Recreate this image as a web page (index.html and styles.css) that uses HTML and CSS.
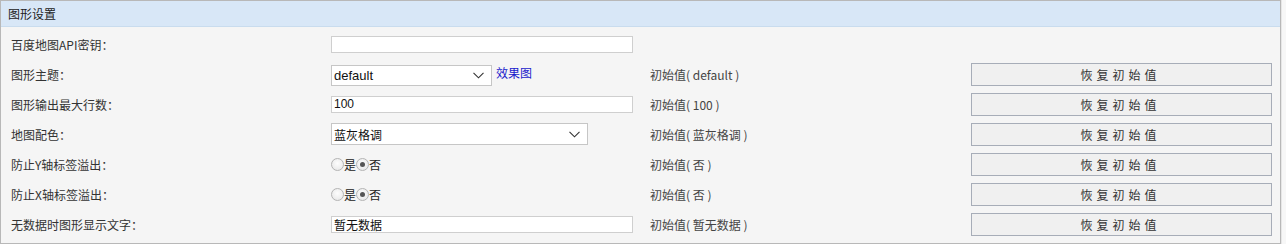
FILE: index.html
```html
<!DOCTYPE html>
<html lang="zh">
<head>
<meta charset="utf-8">
<link rel="stylesheet" href="styles.css">
</head>
<body>
<div class="wrap">
  <div class="panel">
    <div class="head">图形设置</div>
    <div class="grid">
      <div class="lab">百度地图API密钥：</div>
      <div class="ctl"><input class="txt" type="text" value=""></div>
      <div class="init"></div>
      <div class="act"></div>

      <div class="lab">图形主题：</div>
      <div class="ctl"><div class="sel sel-s"><span>default</span><svg width="11" height="7" viewBox="0 0 11 7"><path d="M0.5 0.8 L5.5 5.8 L10.5 0.8" fill="none" stroke="#333" stroke-width="1.1"/></svg></div><a class="link" href="#">效果图</a></div>
      <div class="init">初始值( default )</div>
      <div class="act"><button class="btn">恢复初始值</button></div>

      <div class="lab">图形输出最大行数：</div>
      <div class="ctl"><input class="txt" type="text" value="100"></div>
      <div class="init">初始值( 100 )</div>
      <div class="act"><button class="btn">恢复初始值</button></div>

      <div class="lab">地图配色：</div>
      <div class="ctl"><div class="sel sel-l"><span class="cjk">蓝灰格调</span><svg width="11" height="7" viewBox="0 0 11 7"><path d="M0.5 0.8 L5.5 5.8 L10.5 0.8" fill="none" stroke="#333" stroke-width="1.1"/></svg></div></div>
      <div class="init">初始值( 蓝灰格调 )</div>
      <div class="act"><button class="btn">恢复初始值</button></div>

      <div class="lab">防止Y轴标签溢出：</div>
      <div class="ctl"><label class="rd"><span class="dot"></span>是</label><label class="rd"><span class="dot on"></span>否</label></div>
      <div class="init">初始值( 否 )</div>
      <div class="act"><button class="btn">恢复初始值</button></div>

      <div class="lab">防止X轴标签溢出：</div>
      <div class="ctl"><label class="rd"><span class="dot"></span>是</label><label class="rd"><span class="dot on"></span>否</label></div>
      <div class="init">初始值( 否 )</div>
      <div class="act"><button class="btn">恢复初始值</button></div>

      <div class="lab">无数据时图形显示文字：</div>
      <div class="ctl"><input class="txt cjk" type="text" value="暂无数据"></div>
      <div class="init">初始值( 暂无数据 )</div>
      <div class="act"><button class="btn">恢复初始值</button></div>
    </div>
  </div>
  <div class="sb"></div>
</div>
</body>
</html>
```
FILE: styles.css
```css
html, body {
  margin: 0;
  padding: 0;
  background: #fbfbfb;
}
body {
  font-family: "Noto Sans CJK SC", "Liberation Sans", sans-serif;
  font-size: 12px;
  color: #333;
}
.wrap {
  display: flex;
  width: 1286px;
  height: 244px;
}
.panel {
  width: 1279px;
  height: 242px;
  border: 1px solid #b8b8b8;
  background: #f5f5f5;
  display: flex;
  flex-direction: column;
}
.sb {
  flex: 1;
  background: #f7f7f7;
  border-left: 1px solid #e6e6e6;
}
.head {
  height: 25px;
  line-height: 25px;
  background: #d8e7f7;
  border-bottom: 1px solid #c9dcee;
  padding-left: 7px;
  font-size: 12px;
  color: #222;
}
.grid {
  display: grid;
  grid-template-columns: 320px 320px 320px 319px;
  grid-auto-rows: 30px;
  padding-top: 2px;
}
.grid > div {
  display: flex;
  align-items: center;
}
.lab {
  padding-left: 10px;
  color: #333;
}
.ctl {
  padding-left: 10px;
}
.init {
  padding-left: 9px;
  color: #444;
}
.act {
  padding-left: 10px;
}
.txt {
  box-sizing: border-box;
  width: 302px;
  height: 17px;
  border: 1px solid #cfcfcf;
  background: #fff;
  padding: 0 2px;
  margin: 0;
  font-family: "Liberation Sans", "Noto Sans CJK SC", sans-serif;
  font-size: 12px;
  color: #111;
  outline: none;
}
.txt.cjk {
  font-family: "Noto Sans CJK SC", sans-serif;
}
.sel {
  box-sizing: border-box;
  height: 21px;
  border: 1px solid #c6c6c6;
  background: #fff;
  display: flex;
  align-items: center;
  justify-content: space-between;
  padding: 0 7px 0 2px;
  font-family: "Liberation Sans", sans-serif;
  font-size: 13px;
  color: #111;
}
.sel .cjk {
  font-family: "Noto Sans CJK SC", sans-serif;
  font-size: 12px;
}
.sel-s {
  width: 161px;
  margin-top: 2px;
}
.sel-l {
  width: 257px;
  height: 22px;
}
.link {
  color: #1a1acc;
  text-decoration: none;
  margin-left: 4px;
  margin-top: -4px;
}
.rd {
  display: flex;
  align-items: center;
  color: #222;
}
.dot {
  box-sizing: border-box;
  width: 13px;
  height: 13px;
  border-radius: 50%;
  border: 1px solid #b4b4b4;
  background: radial-gradient(circle at 50% 40%, #fdfdfd, #e4e4e4);
  display: flex;
  align-items: center;
  justify-content: center;
}
.dot.on::after {
  content: "";
  width: 5px;
  height: 5px;
  border-radius: 50%;
  background: #555;
}
.btn {
  box-sizing: border-box;
  width: 301px;
  height: 23px;
  margin: 0;
  border: 1px solid #a7adb8;
  background: #f0f0f0;
  font-family: "Noto Sans CJK SC", sans-serif;
  font-size: 12px;
  letter-spacing: 4px;
  padding-left: 4px;
  color: #333;
}
```
